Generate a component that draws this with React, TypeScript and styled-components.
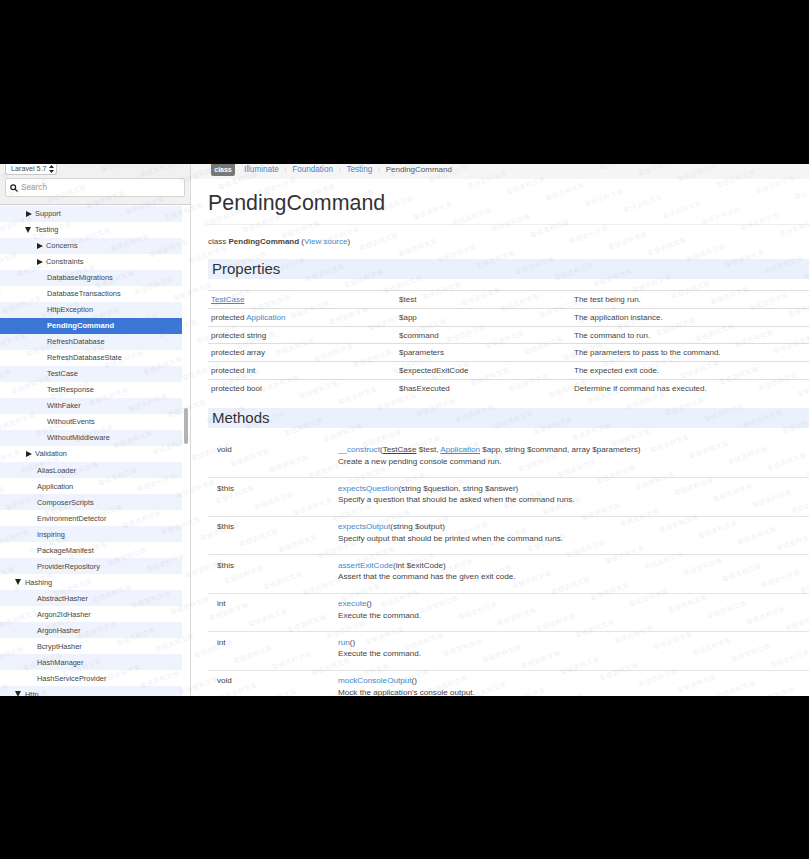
import React from "react";
import styled, { createGlobalStyle } from "styled-components";

const Global = createGlobalStyle`
  html, body { margin: 0; padding: 0; background: #000; }
  body { font-family: "Liberation Sans", Arial, sans-serif; color: #333; }
`;
const Page = styled.div`
  width: 809px; height: 859px; background: #000;
  padding: 164px 0 163px; box-sizing: border-box;
`;
const Frame = styled.div`
  position: relative; display: flex; width: 809px; height: 532px;
  background: #fff; overflow: hidden; filter: blur(0.35px);
`;
const Side = styled.aside`
  width: 190px; flex: none; display: flex; flex-direction: column;
  border-right: 1px solid #d9d9d9; overflow: hidden;
`;
const SideHead = styled.div`
  height: 40px; flex: none; background: #f1f1f1; border-bottom: 1px solid #cfcfcf;
  padding: 0 5px; display: flex; flex-direction: column; gap: 3px;
`;
const Version = styled.div`
  width: 52px; height: 11px; background: #fff; border: 1px solid #c8c8c8; border-top: 0;
  border-radius: 0 0 3px 3px; font-size: 7.2px; line-height: 10px; padding-left: 5px;
  box-sizing: border-box; display: flex; justify-content: space-between; align-items: center;
  color: #444;
`;
const Arrows = styled.svg` margin-right: 2px; flex: none; `;
const SearchBox = styled.div`
  height: 19px; width: 180px; background: #fff; border: 1px solid #d4d4d4; border-radius: 2px;
  display: flex; align-items: center; gap: 3px; padding-left: 4px; box-sizing: border-box;
  font-size: 8.2px; color: #999;
`;
const SideBody = styled.div` display: flex; flex: 1; min-height: 0; `;
const Tree = styled.div` width: 182px; flex: none; margin-top: 0.5px; `;
const Row = styled.div<{ $odd: boolean; $active?: boolean; $pad: number }>`
  height: 16.04px; display: flex; align-items: center; padding-left: ${p => p.$pad}px;
  font-size: ${p => (p.$active ? "7.6px" : "7.4px")}; white-space: nowrap;
  color: ${p => (p.$active ? "#fff" : "#444")};
  font-weight: ${p => (p.$active ? 700 : 400)};
  background: ${p => (p.$active ? "#3a76d6" : p.$odd ? "#eff3fd" : "#fff")};
`;
const Caret = styled.span<{ $open: boolean }>`
  width: 0; height: 0; flex: none;
  ${p => p.$open
    ? "border-left: 3.5px solid transparent; border-right: 3.5px solid transparent; border-top: 6px solid #222; margin-right: 4px;"
    : "border-top: 3.5px solid transparent; border-bottom: 3.5px solid transparent; border-left: 6px solid #222; margin-right: 3px;"}
`;
const Track = styled.div` flex: 1; position: relative; `;
const Thumb = styled.div`
  position: absolute; left: 2px; top: 203px; width: 4px; height: 36px; border-radius: 2px; background: #b4b4b4;
`;
const Main = styled.main` flex: 1; min-width: 0; `;
const Crumbs = styled.div`
  height: 15px; background: #f5f5f5; display: flex; align-items: flex-start;
  padding-left: 20px; font-size: 8.15px; line-height: 11px; color: #ccc;
`;
const Badge = styled.span`
  width: 24px; height: 12px; background: #777; color: #fff; font-weight: 700; font-size: 7px;
  line-height: 11px; text-align: center; border-radius: 0 0 2px 2px; margin-right: 9px;
`;
const Link = styled.a` color: #4288ce; text-decoration: none; `;
const ULink = styled(Link)` text-decoration: underline; `;
const DarkLink = styled(ULink)` color: #444; `;
const Sep = styled.span` width: 13.5px; text-align: center; color: #ccc; font-size: 7px; `;
const Current = styled.span` color: #555; font-size: 8px; `;
const Content = styled.div` padding: 0 0 0 17px; `;
const H1 = styled.h1`
  margin: 0; height: 45px; line-height: 49px; font-size: 21.4px; font-weight: 400; color: #333;
  border-bottom: 1px solid #eee; box-sizing: content-box;
`;
const Summary = styled.p` margin: 0; height: 34px; line-height: 33px; font-size: 8px; color: #444; `;
const Band = styled.h2<{ $gap?: number }>`
  margin: ${p => p.$gap ?? 0}px 0 0; height: 20px; line-height: 20px; background: #ebf1fc; padding-left: 4px;
  font-size: 15px; font-weight: 400; color: #333;
`;
const PropTable = styled.div` margin-top: 11px; `;
const PropRow = styled.div`
  display: grid; grid-template-columns: 188px 175px 1fr; height: 17.83px; align-items: center;
  border-top: 1px solid #ddd; box-sizing: border-box; padding-left: 3px; font-size: 8.03px; color: #444;
`;
const MethodList = styled.div` margin-top: 10.5px; `;
const MethodRow = styled.div`
  display: grid; grid-template-columns: 121px 1fr; height: 38.55px; box-sizing: border-box;
  padding: 5.75px 0 0 9px; font-size: 8.12px; line-height: 11.5px; color: #444;
  & + & { border-top: 1px solid #e4e4e4; padding-top: 4.5px; }
`;
const Sig = styled.div` white-space: nowrap; `;
const Marks = styled.div` position: absolute; inset: 0; pointer-events: none; `;
const Mark = styled.span`
  position: absolute; font-family: "Noto Sans CJK SC", sans-serif; font-size: 6.5px; line-height: 10px;
  letter-spacing: 0.4px; color: rgba(140, 150, 170, 0.15); transform: rotate(-20deg); white-space: nowrap;
`;

type T = [string, number, boolean?, boolean?];
const tree: T[] = [
  ["Support", 26, false, true], ["Testing", 25, true, true], ["Concerns", 37, false, true], ["Constraints", 37, false, true],
  ["DatabaseMigrations", 47], ["DatabaseTransactions", 47], ["HttpException", 47], ["PendingCommand", 47],
  ["RefreshDatabase", 47], ["RefreshDatabaseState", 47], ["TestCase", 47], ["TestResponse", 47], ["WithFaker", 47],
  ["WithoutEvents", 47], ["WithoutMiddleware", 47], ["Validation", 26, false, true], ["AliasLoader", 37], ["Application", 37],
  ["ComposerScripts", 37], ["EnvironmentDetector", 37], ["Inspiring", 37], ["PackageManifest", 37], ["ProviderRepository", 37],
  ["Hashing", 15, true, true], ["AbstractHasher", 37], ["Argon2IdHasher", 37], ["ArgonHasher", 37], ["BcryptHasher", 37],
  ["HashManager", 37], ["HashServiceProvider", 37], ["Http", 15, true, true],
];
const props: [React.ReactNode, string, string][] = [
  [<ULink>TestCase</ULink>, "$test", "The test being run."],
  [<>protected <Link>Application</Link></>, "$app", "The application instance."],
  ["protected string", "$command", "The command to run."],
  ["protected array", "$parameters", "The parameters to pass to the command."],
  ["protected int", "$expectedExitCode", "The expected exit code."],
  ["protected bool", "$hasExecuted", "Determine if command has executed."],
];
const methods: [string, React.ReactNode, string][] = [
  ["void", <><Link>__construct</Link>(<DarkLink>TestCase</DarkLink> $test, <ULink>Application</ULink> $app, string $command, array $parameters)</>, "Create a new pending console command run."],
  ["$this", <><Link>expectsQuestion</Link>(string $question, string $answer)</>, "Specify a question that should be asked when the command runs."],
  ["$this", <><Link>expectsOutput</Link>(string $output)</>, "Specify output that should be printed when the command runs."],
  ["$this", <><Link>assertExitCode</Link>(int $exitCode)</>, "Assert that the command has the given exit code."],
  ["int", <><Link>execute</Link>()</>, "Execute the command."],
  ["int", <><Link>run</Link>()</>, "Execute the command."],
  ["void", <><Link>mockConsoleOutput</Link>()</>, "Mock the application's console output."],
];
const marks: [number, number][] = [];
for (let r = -30; r < 30; r++) for (let c = -30; c < 30; c++) {
  const x = 622 + c * 39 - r * 15;
  const y = 34 + c * 6 + r * 37;
  if (x > -40 && x < 815 && y > -20 && y < 540) marks.push([x, y]);
}

export default function App() {
  return (
    <Page>
      <Global />
      <Frame>
        <Side>
          <SideHead>
            <Version>
              Laravel 5.7
              <Arrows width="5" height="8" viewBox="0 0 5 8" fill="#222"><path d="M2.5 0 5 3H0zM2.5 8 0 5h5z" /></Arrows>
            </Version>
            <SearchBox>
              <svg width="8" height="8" viewBox="0 0 10 10" fill="none" stroke="#222" strokeWidth="1.6">
                <circle cx="4" cy="4" r="3" /><path d="M6.2 6.2 9.4 9.4" />
              </svg>
              Search
            </SearchBox>
          </SideHead>
          <SideBody>
            <Tree>
              {tree.map(([n, pad, open, caret], i) => (
                <Row key={i} $odd={i % 2 === 0} $pad={pad} $active={n === "PendingCommand"}>
                  {caret && <Caret $open={!!open} />}{n}
                </Row>
              ))}
            </Tree>
            <Track><Thumb /></Track>
          </SideBody>
        </Side>
        <Main>
          <Crumbs>
            <Badge>class</Badge>
            <Link>Illuminate</Link><Sep>\</Sep>
            <Link>Foundation</Link><Sep>\</Sep>
            <Link>Testing</Link><Sep>\</Sep>
            <Current>PendingCommand</Current>
          </Crumbs>
          <Content>
            <H1>PendingCommand</H1>
            <Summary>class <b>PendingCommand</b> (<Link>View source</Link>)</Summary>
            <Band>Properties</Band>
            <PropTable>
              {props.map(([a, b, c], i) => (
                <PropRow key={i}><div>{a}</div><div>{b}</div><div>{c}</div></PropRow>
              ))}
            </PropTable>
            <Band $gap={11}>Methods</Band>
            <MethodList>
              {methods.map(([t, s, d], i) => (
                <MethodRow key={i}><div>{t}</div><div><Sig>{s}</Sig><div>{d}</div></div></MethodRow>
              ))}
            </MethodList>
          </Content>
        </Main>
        <Marks>
          {marks.map(([x, y], i) => (
            <Mark key={i} style={{ left: x, top: y }}>零组资料文库</Mark>
          ))}
        </Marks>
      </Frame>
    </Page>
  );
}
